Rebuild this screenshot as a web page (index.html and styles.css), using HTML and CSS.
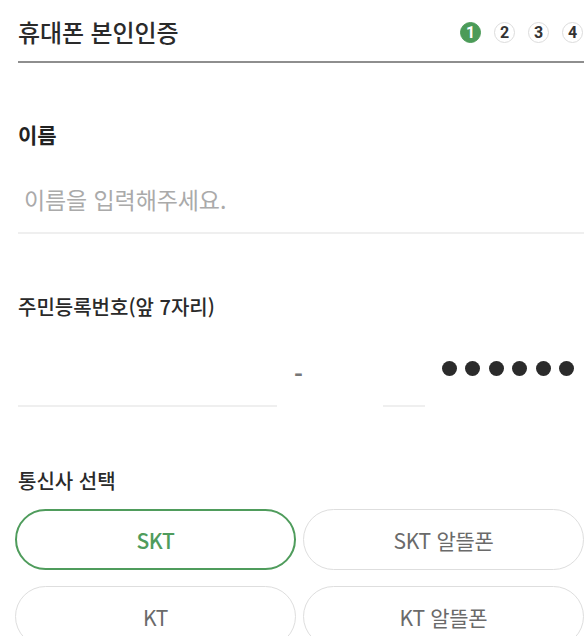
FILE: index.html
```html
<!DOCTYPE html>
<html lang="ko">
<head>
<meta charset="utf-8">
<link rel="stylesheet" href="styles.css">
</head>
<body>
<div class="page">
  <header class="header">
    <h1 class="title">휴대폰 본인인증</h1>
    <ol class="steps">
      <li class="step active">1</li>
      <li class="step">2</li>
      <li class="step">3</li>
      <li class="step">4</li>
    </ol>
  </header>

  <section class="section name-section">
    <h2 class="label">이름</h2>
    <div class="field">
      <span class="placeholder">이름을 입력해주세요.</span>
    </div>
  </section>

  <section class="section rrn-section">
    <h2 class="label">주민등록번호(앞 7자리)</h2>
    <div class="rrn-row">
      <div class="rrn-front"></div>
      <span class="dash">-</span>
      <div class="rrn-digit"></div>
      <div class="dots">
        <span class="dot"></span><span class="dot"></span><span class="dot"></span><span class="dot"></span><span class="dot"></span><span class="dot"></span>
      </div>
    </div>
  </section>

  <section class="section carrier-section">
    <h2 class="label">통신사 선택</h2>
    <div class="carriers">
      <button class="carrier selected">SKT</button>
      <button class="carrier">SKT 알뜰폰</button>
      <button class="carrier">KT</button>
      <button class="carrier">KT 알뜰폰</button>
    </div>
  </section>
</div>
</body>
</html>
```

FILE: styles.css
```css
* { box-sizing: border-box; }
html, body { margin: 0; padding: 0; background: #fff; }
body {
  font-family: "Noto Sans CJK KR", "Noto Sans", sans-serif;
  color: #222;
  width: 588px;
  height: 636px;
  overflow: hidden;
}
.page { padding: 0 4px 0 18px; }

.header {
  height: 63px;
  display: flex;
  align-items: center;
  justify-content: space-between;
  border-bottom: 2px solid #8e8e8e;
}
.title {
  margin: 0;
  font-size: 24px;
  font-weight: 500;
  color: #2a2a2a;
  letter-spacing: -0.1px;
  line-height: 26px;
  margin-top: 2px;
}
.steps {
  list-style: none;
  margin: 0;
  padding: 0;
  display: flex;
  gap: 13px;
  margin-top: 4px;
  margin-right: 1px;
}
.step {
  width: 21px;
  height: 21px;
  border-radius: 50%;
  border: 1px solid #dcdcdc;
  display: flex;
  align-items: center;
  justify-content: center;
  font-family: "Roboto", "Noto Sans", sans-serif;
  font-size: 16px;
  font-weight: 700;
  color: #333;
}
.step.active {
  background: #4b9b58;
  border-color: #4b9b58;
  color: #fff;
}

.label {
  margin: 0;
  font-size: 21px;
  font-weight: 700;
  line-height: 24px;
  color: #222;
}
.rrn-section .label, .carrier-section .label { font-size: 20px; font-weight: 500; color: #2a2a2a; }

.name-section { padding-top: 59px; }
.field {
  height: 88px;
  border-bottom: 2px solid #efefef;
  display: flex;
  align-items: center;
  padding-left: 6px;
  padding-top: 20px;
}
.placeholder {
  font-size: 23px;
  letter-spacing: -0.1px;
  color: #aaaaaa;
}

.rrn-section { padding-top: 61px; }
.rrn-row {
  height: 88px;
  display: flex;
  align-items: flex-end;
}
.rrn-front {
  width: 259px;
  border-bottom: 2px solid #efefef;
}
.dash {
  width: 106px;
  padding-left: 17px;
  align-self: stretch;
  display: flex;
  align-items: center;
  padding-top: 20px;
  color: #777;
  font-size: 24px;
  font-weight: 700;
}
.rrn-digit {
  width: 42px;
  border-bottom: 2px solid #efefef;
}
.dots {
  align-self: stretch;
  display: flex;
  align-items: center;
  gap: 8.4px;
  padding-left: 17px;
  padding-top: 10px;
}
.dot {
  width: 15px;
  height: 15px;
  border-radius: 50%;
  background: #2b2b2b;
}

.carrier-section { padding-top: 62px; }
.carriers {
  margin-top: 16px;
  margin-left: -3px;
  display: grid;
  grid-template-columns: 281px 281px;
  column-gap: 7px;
  row-gap: 16px;
}
.carrier {
  height: 61px;
  border-radius: 31px;
  border: 1.5px solid #dedede;
  background: #fff;
  font-family: "Noto Sans CJK KR", "Noto Sans", sans-serif;
  font-size: 21px;
  letter-spacing: -0.3px;
  color: #6a6a6a;
  padding: 0;
}
.carrier.selected {
  border: 2.5px solid #4f9c5c;
  color: #4f9c5c;
  font-weight: 500;
}
```
